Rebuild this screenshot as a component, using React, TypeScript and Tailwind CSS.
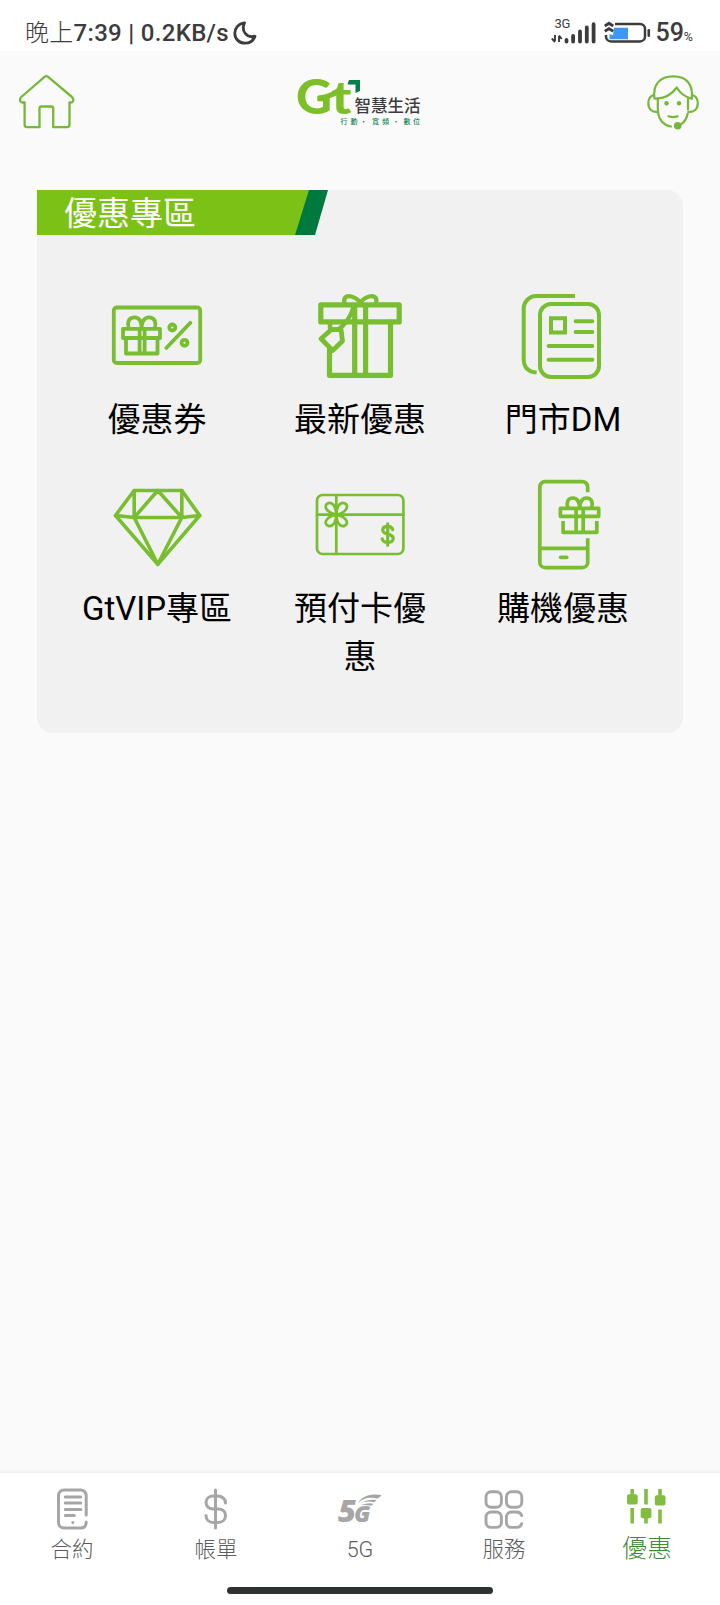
import type { ReactNode } from "react";

type Offer = {
  label: string;
  icon: ReactNode;
};

type Tab = {
  label: string;
  icon: ReactNode;
  active?: boolean;
};

const GREEN = "#78be30";

function OfferIcon({ stroke, children }: { stroke: number; children: ReactNode }) {
  return (
    <svg
      className="h-[90px] w-[90px] overflow-visible"
      viewBox="0 0 90 90"
      fill="none"
      stroke={GREEN}
      strokeWidth={stroke}
      strokeLinecap="round"
      strokeLinejoin="round"
    >
      {children}
    </svg>
  );
}

const offers: Offer[] = [
  {
    label: "優惠券",
    icon: (
      <OfferIcon stroke={3.8}>
        <rect x="1.8" y="16.5" width="86.4" height="55.5" rx="3" />
        <path d="M11 37.8h37v9.2h-37zM14 47v15.5h31.5V47M27.6 38v24M32.6 38v24" />
        <path d="M29.5 37.5c.5-7-2.5-11.5-7.5-11.2-5.6.3-7 5.7-5.2 11M29.5 37.5c0-7 3-11.5 8-11.2 5.6.3 7 5.7 5.2 11" />
        <path d="M54.3 57 78.4 31.8" />
        <circle cx="60.3" cy="36.5" r="3" />
        <circle cx="72.5" cy="51.8" r="3" />
      </OfferIcon>
    ),
  },
  {
    label: "最新優惠",
    icon: (
      <OfferIcon stroke={5.2}>
        <path d="M5.8 13.9h78.4v17h-78.4z" />
        <path d="M14.5 58.5v25.8h61V31M39.7 16v68M50.6 16v68" />
        <path d="M29.8 13c-2-6 1-8.8 6.5-7.5 4.5 1 7 3.5 9 6.2 2-2.7 4.5-5.2 9-6.2 5.5-1.3 8.5 1.5 6.5 7.5" strokeWidth="4.3" />
        <path d="M38.5 16c-2 7-6 14-10.5 18.5l-4 3.5M15 32v6" strokeWidth="4.5" />
        <path d="M16.5 38.5h9.500l1.500 11.500-9.800 9.500L6 47.700z" strokeWidth="4.8" />
      </OfferIcon>
    ),
  },
  {
    label: "門市DM",
    icon: (
      <OfferIcon stroke={4}>
        <rect x="22" y="13" width="59" height="73" rx="11" />
        <path strokeLinecap="butt" d="M57 5H18.3A12.7 12.7 0 0 0 5.7 17.7V68q0 12.500 12.900 13.600" />
        <path strokeLinejoin="miter" d="M33 27.2h14v14.4h-14z" />
        <path d="M57.6 30.3h16.7M57.6 41h16.7M30.600 55h43.700M30.600 68.700h43.700" />
      </OfferIcon>
    ),
  },
  {
    label: "GtVIP專區",
    icon: (
      <OfferIcon stroke={3.6}>
        <path d="M22.2 10.5h47.6L87.7 35.5 45.8 84.3 3.5 35.5z" />
        <path d="M3.5 35.5 22.2 37.5h47.6L87.7 35.5M22.2 10.5v27L45.8 10.5l24 27v-27M22.2 37.5 45.8 84.3l24-46.8" />
      </OfferIcon>
    ),
  },
  {
    label: "預付卡優惠",
    icon: (
      <OfferIcon stroke={2.7}>
        <rect x="2" y="15" width="86.4" height="59" rx="5.5" />
        <path d="M2 34.6h86.4M21.3 15v59" />
        <path d="M21.3 34.6C21 26 17 21 12.5 23.5S12 33 21.3 34.6c9.3-1.6 13.5-8.5 8.8-11.1S21.6 26 21.3 34.6c.3 8.6 4.3 13.4 8.8 10.9s.5-9.3-8.8-10.9c-9.3 1.6-13.3 8.4-8.8 10.9s8.5-2.3 8.8-10.9z" />
        <path d="M77.7 49.6c-.6-2-2.3-3.2-5-3.2-3 0-5 1.400-5 3.700 0 5.600 10.500 2.500 10.500 8.300 0 2.500-2.400 4-5.500 4-3 0-5-1.300-5.500-3.500M72.700 43.800v21.400" strokeWidth="3.2" />
      </OfferIcon>
    ),
  },
  {
    label: "購機優惠",
    icon: (
      <OfferIcon stroke={3.7}>
        <g transform="translate(-0.6 0)">
          <path strokeLinecap="butt" d="M70.3 12.2V7a5.4 5.4 0 0 0-5.4-5.4H27.8A5.4 5.4 0 0 0 22.4 7v75.2a5.4 5.4 0 0 0 5.4 5.4h37.1a5.4 5.4 0 0 0 5.4-5.4V58.3M22.4 68.3h48" />
          <path d="M43.3 77.3h6" />
          <path d="M43 28.3h38.300v8H43z" />
          <path strokeLinecap="butt" d="M45.7 41v11.300h33.700V41M58.700 28v24M65.800 28v24" />
          <path d="M62.3 27.5c-.3-6-3-9.700-7-9.500-5 .2-6.500 4.500-5 9.500M62.300 27.500c.3-6 3-9.700 7-9.500 5 .2 6.500 4.500 5 9.500" />
        </g>
      </OfferIcon>
    ),
  },
];

const tabs: Tab[] = [
  {
    label: "合約",
    icon: (
      <svg className="h-[42px] w-8" viewBox="0 0 32 42" fill="none" stroke="#a6a6a6" strokeWidth="3" strokeLinecap="round">
        <path d="M30.2 27V7.5A5.5 5.5 0 0 0 24.7 2H8A5.5 5.5 0 0 0 2.5 7.500v27A5.500 5.500 0 0 0 8 40h16.700q5.500 0 5.500-6" />
        <path d="M9.3 9h15.500M9.300 15h15.500M9.300 21.500h15.500M9.300 27.500h9" />
        <circle cx="16.8" cy="34.5" r="1.5" fill="#a6a6a6" stroke="none" />
      </svg>
    ),
  },
  {
    label: "帳單",
    icon: (
      <svg className="h-[42px] w-6" viewBox="0 0 24 42" fill="none" stroke="#a6a6a6" strokeWidth="3" strokeLinecap="round">
        <path d="M11.5 2v38M21.5 15c0-4-3.500-7-8-7h-4C5 8 2 10.800 2 14.500S5 21 9 21h5c4.500 0 7.500 2.500 7.500 6.500s-3 7-7.500 7h-4.500c-4.500 0-7.500-3-7.500-7" />
      </svg>
    ),
  },
  {
    label: "5G",
    icon: (
      <svg className="h-[42px] w-11 overflow-visible" viewBox="0 0 44 42">
        <text x="0" y="34" fontFamily="Open Sans, sans-serif" fontSize="30" fontWeight="800" fontStyle="italic" fill="#a6a6a6" textLength="18" lengthAdjust="spacingAndGlyphs">
          5
        </text>
        <text x="16" y="34" fontFamily="Open Sans, sans-serif" fontSize="23" fontWeight="800" fontStyle="italic" fill="#a6a6a6" textLength="16.5" lengthAdjust="spacingAndGlyphs">
          G
        </text>
        <path d="M20 15C25 7 34 5.5 43.5 7q-2 3-4 3.5C32 8.5 25 10 20 15z" fill="#a6a6a6" />
        <path d="M22 15.5q8-5 16.5-3.5l-2 2.3q-8-2-14.5 1.2zM23 17q7-2.5 12.5-1.2l-2 2q-5-1.2-10.5-.8z" fill="#a6a6a6" />
      </svg>
    ),
  },
  {
    label: "服務",
    icon: (
      <svg className="h-[42px] w-10" viewBox="0 0 40 42" fill="none" stroke="#a6a6a6" strokeWidth="2.9" strokeLinecap="round">
        <rect x="2" y="3.8" width="15.4" height="15.4" rx="5" />
        <rect x="22.4" y="3.8" width="15.4" height="15.4" rx="5" />
        <rect x="2" y="24" width="15.4" height="15.4" rx="5" />
        <path d="M37.7 27.7q-1-3.700-5-3.700h-5.300a5 5 0 0 0-5 5v5.400a5 5 0 0 0 5 5h5.300q4 0 5-3.700" />
      </svg>
    ),
  },
  {
    label: "優惠",
    active: true,
    icon: (
      <svg className="mr-1 h-[42px] w-10" viewBox="0 0 40 42" fill="none" stroke="#82bc41" strokeWidth="3.6">
        <path d="M6.2 1v10M6.2 20v15.5M20 1v15.5M20 24v11.5M34 1v10M34 21.5v14" />
        <g fill="#82bc41" stroke="none">
          <rect x="1" y="6.2" width="10.7" height="10.3" rx="2" />
          <rect x="14.7" y="20" width="10.7" height="10.3" rx="2" />
          <rect x="28.8" y="7.3" width="10.7" height="10.3" rx="2" />
        </g>
      </svg>
    ),
  },
];

function StatusBar() {
  return (
    <div className="flex h-[51px] items-center justify-between bg-white pt-[15px] pr-[27px] pl-[25px] text-[#3c3c3c]">
      <div className="flex items-center">
        <span className="text-[24px] leading-9 font-medium tracking-[0.3px] whitespace-nowrap">
          <span className="font-light">晚上</span>7:39 | 0.2KB/s
        </span>
        <svg className="ml-1 h-6 w-6" viewBox="0 0 24 24" fill="none" stroke="#3c3c3c" strokeWidth="2.8" strokeLinejoin="round">
          <path d="M11.5 1.8C5.5 2.500 1.800 7 1.800 12.200c0 5.800 4.500 10 10.200 10 4.700 0 8.500-2.700 10-7-7.500 2.500-14.500-4.700-10.500-13.400z" />
        </svg>
      </div>
      <div className="flex items-center">
        <div className="flex w-[46px] flex-col">
          <span className="-mt-1.5 ml-[3px] text-[13px] leading-4 tracking-tight">3G</span>
          <svg className="-mt-2.5 h-[22px] w-[46px]" viewBox="0 0 46 22">
            <path d="M4 13v6M.8 16.500 4 20M8 20v-6M8 13.500l2.800 3.500" stroke="#3c3c3c" strokeWidth="1.9" fill="none" />
            <path d="M15.5 19.500v-1.500M22.100 19.500v-5.500M29 19.500V9.500M35.800 19.500V5.500M42.600 19.500V2.200" stroke="#3c3c3c" strokeWidth="3.8" strokeLinecap="round" />
          </svg>
        </div>
        <svg className="ml-[7px] h-6 w-[47px]" viewBox="0 0 47 24">
          <path d="M11 3h25a5 5 0 0 1 5 5v7.400a5 5 0 0 1-5 5H7a5 5 0 0 1-5-5V14" fill="none" stroke="#3c3c3c" strokeWidth="2.5" />
          <path d="M10 6.700h14v11.500H5.500V13L9 14.200z" fill="#3e97f5" />
          <path d="M44.8 9.200v5.500" stroke="#3c3c3c" strokeWidth="2.6" strokeLinecap="round" />
          <path d="M.8 5 5 2.300 9.200 5M.8 10.300 5 7.600l4.200 2.700" fill="none" stroke="#3c3c3c" strokeWidth="2.9" />
        </svg>
        <span className="ml-1 text-[25px] leading-9 font-medium">59</span>
        <span className="mt-2 text-[12.5px]">%</span>
      </div>
    </div>
  );
}

function Logo() {
  return (
    <svg className="-ml-[3px] h-[50px] w-[126px] overflow-visible" viewBox="0 0 126 50">
      <text x="-1" y="36.5" fontFamily="Lato, sans-serif" fontSize="48" fontWeight="900" fill="#7cbf28" textLength="36" lengthAdjust="spacingAndGlyphs">
        G
      </text>
      <text x="34.5" y="36.5" fontFamily="Lato, sans-serif" fontSize="45" fontWeight="900" fill="#7cbf28" textLength="20" lengthAdjust="spacingAndGlyphs">
        t
      </text>
      <path d="M21 18.5q12-1 20-8l2 6q-9 6-22 6z" fill="#7cbf28" />
      <path d="M52 3h11V14l-4.5 2V7.500h-8z" fill="#00804a" />
      <text x="57.5" y="35" fontFamily="Noto Sans CJK TC, sans-serif" fontSize="16.5" fontWeight="500" fill="#3c3c3c" textLength="66" lengthAdjust="spacingAndGlyphs">
        智慧生活
      </text>
      <text
        x="43.5 53.5 63 75 85 95.5 106.5 116"
        y="47"
        fontFamily="Noto Sans CJK TC, sans-serif"
        fontSize="7"
        fontWeight="500"
        fill="#1b8a58"
      >
        行動・寬頻・數位
      </text>
    </svg>
  );
}

function Header() {
  return (
    <header className="flex h-[102px] items-center justify-between pr-[21px] pl-[18px]">
      <svg className="h-[56px] w-[57px]" viewBox="0 0 57 56" fill="none" stroke="#76b83a" strokeWidth="2.3" strokeLinejoin="round">
        <path d="M26.8 2.7q1.500-1.200 3 0L54 23q2 2 1 4.300-.8 1.200-2 1.200h-1.500v22q0 2.700-2.700 2.700H35.200V34.500q0-2-2-2H23.500q-2 0-2 2v18.700H9.300q-2.700 0-2.700-2.700V28.500H5q-2.500 0-3-2.200-.2-2 1.300-3.300z" />
      </svg>
      <Logo />
      <svg className="h-[56px] w-[52px]" viewBox="0 0 52 56" fill="none" stroke="#76b83a" strokeWidth="2.2" strokeLinecap="round" strokeLinejoin="round">
        <path d="M7.5 24.5C5.500 10.500 13 2.300 26.300 2.300S46.500 10.500 44.700 24.800C38 23 33 19 29.800 13.500 25 20 17 25 7.500 24.500z" />
        <path d="M10.8 25v9.500q0 11.500 7.500 16 3.300 1.700 5.700 2M41 25v10.500M40.700 39.500q-1 7-7.500 11.500" />
        <path d="M6.8 21C3 22 1.300 25.500 1.300 29.500c0 5.500 4 9 9.200 8.300M45.300 21c3.800 1 5.500 4.500 5.500 8.500 0 5.500-4 9-9.500 8.300" />
        <path d="M21.5 42.200q5 1.800 9 0" />
        <circle cx="19.5" cy="29.3" r="2.2" fill="#76b83a" stroke="none" />
        <circle cx="32" cy="29.3" r="2.2" fill="#76b83a" stroke="none" />
        <circle cx="30.7" cy="51.700" r="2.7" fill="#76b83a" />
      </svg>
    </header>
  );
}

export default function App() {
  return (
    <div className="flex h-[1605px] w-[720px] flex-col overflow-hidden bg-[#fafafa] font-[Roboto,'Noto_Sans_CJK_TC',sans-serif]">
      <StatusBar />
      <Header />

      <main className="flex-1 px-[37px] pt-[37px]">
        <section className="h-[543px] overflow-hidden rounded-2xl rounded-tl-none bg-[#f1f1f1]">
          {/* Section ribbon */}
          <div className="flex h-[45px] w-[291px] bg-[#00793e] [clip-path:polygon(0_0,100%_0,278px_100%,0_100%)]">
            <h2 className="w-[272px] bg-[#7cc216] pl-[27px] text-[33px] leading-[47px] text-white [clip-path:polygon(0_0,100%_0,258px_100%,0_100%)]">
              優惠專區
            </h2>
          </div>

          {/* Offers */}
          <div className="mt-14 grid grid-cols-[repeat(3,203px)] justify-center gap-y-9">
            {offers.map((offer) => (
              <div key={offer.label} className="flex flex-col items-center">
                {offer.icon}
                <p className="mt-[15px] w-[154px] text-center text-[33px] leading-[48px] break-all text-black">
                  {offer.label}
                </p>
              </div>
            ))}
          </div>
        </section>
      </main>

      {/* Bottom tabs */}
      <nav className="h-[132px] bg-white shadow-[0_-1px_3px_rgba(0,0,0,0.08)]">
        <div className="flex h-[114px] pt-[15px]">
          {tabs.map((tab) => (
            <div key={tab.label} className="flex flex-1 flex-col items-center">
              {tab.icon}
              {tab.active ? (
                <span className="mt-0.5 mr-[2px] text-[25px] leading-[34px] font-light text-[#3f8a35]">{tab.label}</span>
              ) : (
                <span className="mt-1 text-[21.5px] leading-8 font-light text-[#5c5c5c]">{tab.label}</span>
              )}
            </div>
          ))}
        </div>
        <div className="mx-auto h-[7px] w-[266px] rounded-full bg-[#303231]" />
      </nav>
    </div>
  );
}
